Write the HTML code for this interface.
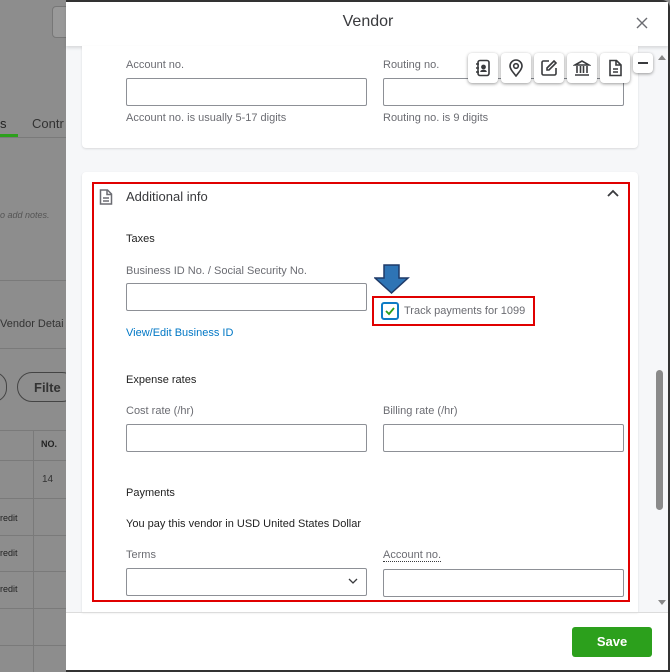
<!DOCTYPE html>
<html><head><style>
*{box-sizing:border-box;margin:0;padding:0}
body{width:670px;height:672px;overflow:hidden;font-family:"Liberation Sans",sans-serif;background:#8d8d8d;position:relative;color:#393a3d}
.a{position:absolute}
.lbl{position:absolute;font-size:11px;color:#6b6c72}
.inp{position:absolute;height:28px;border:1px solid #8d9096;border-radius:2px;background:#fff}
.h{position:absolute;font-size:11px;color:#222;font-weight:normal}
.ib{position:absolute;top:53px;width:30px;height:30px;background:#fff;border-radius:4px;box-shadow:0 1px 3px rgba(0,0,0,.4);display:flex;align-items:center;justify-content:center}
</style></head><body>
<!-- backdrop -->
<div class="a" style="left:52px;top:6px;width:30px;height:32px;border:1px solid #777;border-radius:4px;background:#999"></div>
<div class="a" style="left:0;top:137px;width:66px;height:1px;background:#7a7a7a"></div>
<div class="a" style="left:0;top:116px;font-size:13px;color:#222">s</div>
<div class="a" style="left:0;top:134px;width:18px;height:3px;background:#2ca01c"></div>
<div class="a" style="left:32px;top:116px;font-size:13px;color:#333">Contr</div>
<div class="a" style="left:0;top:210px;font-size:9px;font-style:italic;color:#555">o add notes.</div>
<div class="a" style="left:0;top:280px;width:66px;height:1px;background:#7a7a7a"></div>
<div class="a" style="left:0;top:318px;font-size:11px;color:#333">Vendor Detai</div>
<div class="a" style="left:0;top:348px;width:66px;height:1px;background:#7a7a7a"></div>
<div class="a" style="left:-20px;top:372px;width:27px;height:30px;border:1px solid #444;border-radius:15px"></div>
<div class="a" style="left:17px;top:372px;width:60px;height:30px;border:1px solid #444;border-radius:15px;padding:7px 0 0 16px;font-size:13px;font-weight:bold;color:#333">Filte</div>
<div class="a" style="left:0;top:430px;width:66px;height:1px;background:#7a7a7a"></div>
<div class="a" style="left:33px;top:430px;width:1px;height:242px;background:#7a7a7a"></div>
<div class="a" style="left:41px;top:439px;font-size:9px;font-weight:bold;color:#222">NO.</div>
<div class="a" style="left:0;top:460px;width:66px;height:1px;background:#7a7a7a"></div>
<div class="a" style="left:42px;top:474px;font-size:10px;color:#333">14</div>
<div class="a" style="left:0;top:498px;width:66px;height:1px;background:#7a7a7a"></div>
<div class="a" style="left:0;top:513px;font-size:9px;color:#222">redit</div>
<div class="a" style="left:0;top:535px;width:66px;height:1px;background:#7a7a7a"></div>
<div class="a" style="left:0;top:548px;font-size:9px;color:#222">redit</div>
<div class="a" style="left:0;top:571px;width:66px;height:1px;background:#7a7a7a"></div>
<div class="a" style="left:0;top:584px;font-size:9px;color:#222">redit</div>
<div class="a" style="left:0;top:608px;width:66px;height:1px;background:#7a7a7a"></div>
<div class="a" style="left:0;top:645px;width:66px;height:1px;background:#7a7a7a"></div>
<!-- modal -->
<div class="a" style="left:66px;top:0;width:604px;height:672px;background:#fff;border-top:2px solid #333;border-right:2px solid #333;border-bottom:2px solid #333;border-radius:0 8px 0 0"></div>
<div class="a" style="left:66px;top:46px;width:602px;height:566px;background:#f6f7f9"></div>
<div class="a" style="left:66px;top:2px;width:602px;height:44px;background:#fff;box-shadow:0 2px 3px rgba(0,0,0,.12)"></div>
<div class="a" style="left:0;top:13px;width:736px;text-align:center;font-size:16px;color:#393a3d">Vendor</div>
<svg class="a" style="left:636px;top:17px" width="12" height="12" viewBox="0 0 12 12"><path d="M1 1l10 10M11 1L1 11" stroke="#6b6c72" stroke-width="1.4"/></svg>
<!-- card 1 -->
<div class="a" style="left:82px;top:46px;width:556px;height:102px;background:#fff;border-radius:0 0 4px 4px;box-shadow:0 1px 2px rgba(0,0,0,.12)"></div>
<div class="lbl" style="left:126px;top:59px">Account no.</div>
<div class="inp" style="left:126px;top:78px;width:241px"></div>
<div class="lbl" style="left:126px;top:112px">Account no. is usually 5-17 digits</div>
<div class="lbl" style="left:383px;top:59px">Routing no.</div>
<div class="inp" style="left:383px;top:78px;width:241px"></div>
<div class="lbl" style="left:383px;top:112px">Routing no. is 9 digits</div>
<!-- icon toolbar -->
<div class="ib" style="left:468px"><svg width="16" height="18" viewBox="0 0 16 18" fill="none" stroke="#393a3d" stroke-width="1.6"><rect x="3" y="1.5" width="11" height="15" rx="2"/><path d="M1 5h3M1 9h3M1 13h3"/><circle cx="8.5" cy="8" r="1.6" fill="#393a3d"/><path d="M6 13c0-2 5-2 5 0" fill="#393a3d"/></svg></div>
<div class="ib" style="left:501px"><svg width="16" height="18" viewBox="0 0 16 18" fill="none" stroke="#393a3d" stroke-width="1.6"><path d="M8 17C4 12 2 9.5 2 7a6 6 0 0 1 12 0c0 2.5-2 5-6 10z"/><circle cx="8" cy="7" r="2.3"/></svg></div>
<div class="ib" style="left:534px"><svg width="18" height="18" viewBox="0 0 18 18" fill="none" stroke="#393a3d" stroke-width="1.6"><path d="M9 2H3.5A1.5 1.5 0 0 0 2 3.5v11A1.5 1.5 0 0 0 3.5 16h11a1.5 1.5 0 0 0 1.5-1.5V9"/><path d="M14 2l2 2-7 7H7V9z"/></svg></div>
<div class="ib" style="left:567px"><svg width="18" height="18" viewBox="0 0 18 18" fill="none" stroke="#393a3d" stroke-width="1.6"><path d="M2 6L9 2l7 4zM4 7v7M7.5 7v7M10.5 7v7M14 7v7M2 16h14"/></svg></div>
<div class="ib" style="left:600px"><svg width="16" height="18" viewBox="0 0 16 18" fill="none" stroke="#393a3d" stroke-width="1.6"><path d="M3 1.5h6.5L14 6v10.5H3z"/><path d="M9 1.5V6h5M6 10h5M6 13h5"/></svg></div>
<div class="a" style="left:633px;top:53px;width:20px;height:20px;background:#fff;border-radius:4px;box-shadow:0 1px 3px rgba(0,0,0,.4)"><div class="a" style="left:5px;top:9px;width:10px;height:1.5px;background:#393a3d"></div></div>
<!-- card 2 -->
<div class="a" style="left:82px;top:172px;width:556px;height:440px;background:#fff;border-radius:4px 4px 0 0;box-shadow:0 1px 2px rgba(0,0,0,.12)"></div>
<div class="a" style="left:92px;top:182px;width:538px;height:420px;border:2px solid #e00000"></div>
<svg class="a" style="left:99px;top:189px" width="14" height="16" viewBox="0 0 14 16" fill="none" stroke="#6b6c72" stroke-width="1.5"><path d="M1.5 1h7L12.5 5v10h-11z"/><path d="M8 1v4.5h4.5M4 9h6M4 12h6"/></svg>
<div class="a" style="left:126px;top:189px;font-size:13px;color:#393a3d">Additional info</div>
<svg class="a" style="left:607px;top:189px" width="12" height="8" viewBox="0 0 12 8" fill="none" stroke="#393a3d" stroke-width="1.8"><path d="M1 7l5-5 5 5"/></svg>
<div class="h" style="left:126px;top:233px">Taxes</div>
<div class="lbl" style="left:126px;top:265px">Business ID No. / Social Security No.</div>
<div class="inp" style="left:126px;top:283px;width:241px"></div>
<div class="a" style="left:126px;top:327px;font-size:11px;color:#0077c5">View/Edit Business ID</div>
<!-- arrow -->
<svg class="a" style="left:374px;top:264px" width="36" height="30" viewBox="0 0 36 30"><path d="M10 1h15v13h9L17.5 29 1 14h9z" fill="#2e74b5" stroke="#1f3a68" stroke-width="1.5"/></svg>
<div class="a" style="left:372px;top:296px;width:163px;height:30px;border:2px solid #e00000"></div>
<div class="a" style="left:381px;top:302px;width:18px;height:18px;border:2px solid #0e7bc5;border-radius:3px;background:#fff"><svg class="a" style="left:2px;top:2px" width="10" height="10" viewBox="0 0 10 10"><path d="M1 5l3 3 5-6" fill="none" stroke="#2ca01c" stroke-width="1.8"/></svg></div>
<div class="a" style="left:404px;top:305px;font-size:11px;color:#6b6c72">Track payments for 1099</div>
<div class="h" style="left:126px;top:374px">Expense rates</div>
<div class="lbl" style="left:126px;top:405px">Cost rate (/hr)</div>
<div class="inp" style="left:126px;top:424px;width:241px"></div>
<div class="lbl" style="left:383px;top:405px">Billing rate (/hr)</div>
<div class="inp" style="left:383px;top:424px;width:241px"></div>
<div class="h" style="left:126px;top:487px">Payments</div>
<div class="h" style="left:126px;top:518px">You pay this vendor in USD United States Dollar</div>
<div class="lbl" style="left:126px;top:549px">Terms</div>
<div class="inp" style="left:126px;top:568px;width:241px"></div>
<svg class="a" style="left:348px;top:578px" width="10" height="7" viewBox="0 0 10 7" fill="none" stroke="#393a3d" stroke-width="1.3"><path d="M1 1l4 4 4-4"/></svg>
<div class="lbl" style="left:383px;top:549px;border-bottom:1px dotted #393a3d">Account no.</div>
<div class="inp" style="left:383px;top:569px;width:241px"></div>
<!-- scrollbar -->
<div class="a" style="left:656px;top:370px;width:7px;height:140px;background:#8a8a8a;border-radius:4px"></div>
<div class="a" style="left:658px;top:55px;width:0;height:0;border-left:4px solid transparent;border-right:4px solid transparent;border-bottom:5px solid #888"></div>
<div class="a" style="left:658px;top:600px;width:0;height:0;border-left:4px solid transparent;border-right:4px solid transparent;border-top:5px solid #888"></div>
<!-- footer -->
<div class="a" style="left:66px;top:612px;width:602px;height:1px;background:#dcdcdc"></div>
<div class="a" style="left:572px;top:627px;width:80px;height:30px;background:#2ca01c;border-radius:3px;color:#fff;font-weight:bold;font-size:13px;text-align:center;line-height:30px">Save</div>
</body></html>
